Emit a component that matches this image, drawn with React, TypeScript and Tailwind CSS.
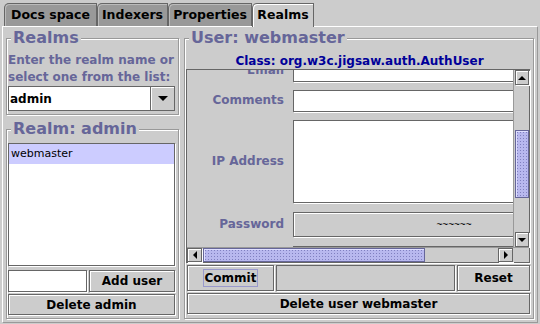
import type { ReactNode } from "react"

// Swing Metal look-alike: Realms tab of the Jigsaw admin tool

const etched =
  "border border-[#999999] shadow-[inset_1px_1px_0_#ffffff,1px_1px_0_#ffffff]"
const raised =
  "border border-[#666666] bg-[#cccccc] shadow-[inset_1px_1px_0_#ffffff,1px_1px_0_#ffffff]"
const field = "border border-[#666666] shadow-[1px_1px_0_#ffffff]"
const thumb =
  "border border-[#666699] bg-[#b8b8ee] bg-[radial-gradient(#8080c0_0.7px,transparent_0.8px)] bg-[length:3px_3px] shadow-[inset_1px_1px_0_#e0e0ff]"
const legend =
  "ml-[3px] px-[2px] bg-[#cccccc] text-[16px] leading-[16px] font-bold text-[#666699]"

function Tri({ dir }: { dir: "up" | "down" | "left" | "right" | "combo" }) {
  if (dir === "left" || dir === "right") {
    return (
      <svg width="4" height="8" viewBox="0 0 4 8">
        <polygon points={dir === "left" ? "4,0 4,8 0,4" : "0,0 0,8 4,4"} fill="#000" />
      </svg>
    )
  }
  if (dir === "combo") {
    return (
      <svg width="10" height="5" viewBox="0 0 10 5">
        <polygon points="0,0 10,0 5,5" fill="#000" />
      </svg>
    )
  }
  return (
    <svg width="8" height="4" viewBox="0 0 8 4">
      <polygon points={dir === "up" ? "0,4 8,4 4,0" : "0,0 8,0 4,4"} fill="#000" />
    </svg>
  )
}

function Tab({
  children,
  className = "",
  selected = false,
}: {
  children: ReactNode
  className?: string
  selected?: boolean
}) {
  return (
    <div
      className={`flex items-center justify-center rounded-tl-[5px] border-t border-l border-r border-[#666666] text-[12.5px] font-bold text-black ${
        selected
          ? "h-[24px] -mb-px pb-[1px] bg-[#cccccc] shadow-[inset_1px_1px_0_#ffffff]"
          : "h-[23px] bg-[#999999] shadow-[inset_1px_1px_0_#bbbbbb]"
      } ${className}`}
    >
      {children}
    </div>
  )
}

function Button({ children, className = "" }: { children: ReactNode; className?: string }) {
  return (
    <div
      className={`${raised} flex items-center justify-center text-[12px] font-bold text-black ${className}`}
    >
      {children}
    </div>
  )
}

function Row({
  label,
  className = "",
  children,
}: {
  label: string
  className?: string
  children: ReactNode
}) {
  return (
    <div className={`flex items-center shrink-0 ${className}`}>
      <div className="w-[97px] shrink-0 pb-[2px] text-right text-[12px] leading-[14px] font-bold text-[#666699]">
        {label}
      </div>
      <div className="ml-[9px] w-[322px] h-full shrink-0">{children}</div>
    </div>
  )
}

export default function App() {
  return (
    <div className="w-[540px] h-[324px] bg-[#cccccc] pt-[3px] px-[2px] pb-[1px] flex flex-col overflow-hidden font-['DejaVu_Sans',sans-serif]">
      {/* tabs */}
      <div className="relative z-10 flex items-end h-[23px] pl-[2px] shrink-0">
        <Tab className="w-[93px]">Docs space</Tab>
        <Tab className="w-[71px]">Indexers</Tab>
        <Tab className="w-[84px]">Properties</Tab>
        <Tab className="w-[62px]" selected>
          Realms
        </Tab>
      </div>

      <div className="flex-1 flex gap-[5px] pl-[3px] pr-[3px] pt-[3px] border border-white border-r-[#999999] border-b-[#999999]">
        {/* left column */}
        <div className="w-[173px] flex flex-col gap-[6px]">
          <fieldset className={`${etched} h-[85px] flex flex-col pl-[1px] pr-[3px] pt-[6px]`}>
            <legend className={legend}>Realms</legend>
            <div className="text-[12px] leading-[17px] font-bold text-[#666699] whitespace-nowrap">
              Enter the realm name or
            </div>
            <div className="text-[12px] leading-[17px] font-bold text-[#666699] whitespace-nowrap">
              select one from the list:
            </div>
            <div className="flex h-[25px] border border-[#666666]">
              <div className="flex-1 bg-white flex items-center pl-[1px] text-[12px] font-bold text-black">
                admin
              </div>
              <div className="w-[24px] bg-[#cccccc] border-l border-[#666666] shadow-[inset_1px_1px_0_#ffffff] flex items-center justify-center">
                <Tri dir="combo" />
              </div>
            </div>
          </fieldset>

          <fieldset className={`${etched} h-[198px] flex flex-col pl-[1px] pr-[3px] pt-[6px]`}>
            <legend className={legend}>Realm: admin</legend>
            <div className={`${field} h-[123px] shrink-0 bg-white`}>
              <div className="h-[20px] bg-[#ccccff] flex items-center pl-[2px] text-[11px] text-black">
                webmaster
              </div>
            </div>
            <div className="mt-[4px] flex gap-[2px] h-[22px] shrink-0">
              <div className={`${field} w-[79px] bg-white`} />
              <Button className="flex-1">Add user</Button>
            </div>
            <Button className="mt-[2px] h-[21px] shrink-0">Delete admin</Button>
          </fieldset>
        </div>

        {/* right column */}
        <fieldset className={`${etched} w-[350px] h-[289px] flex flex-col pl-[1px] pt-[7px]`}>
          <legend className={legend}>User: webmaster</legend>
          <div className="text-center text-[12px] leading-[16px] font-bold text-[#000099] whitespace-nowrap">
            Class: org.w3c.jigsaw.auth.AuthUser
          </div>

          {/* scroll pane */}
          <div className="w-[344px] h-[194px] border border-[#666666] shadow-[1px_1px_0_#ffffff] flex flex-col shrink-0">
            <div className="flex h-[177px]">
              <div className="w-[326px] h-[177px] overflow-hidden">
                <div className="w-[428px] -mt-[10px] flex flex-col">
                  <Row label="Email" className="h-[22px]">
                    <div className={`${field} h-full bg-white`} />
                  </Row>
                  <Row label="Comments" className="h-[22px] mt-[8px]">
                    <div className={`${field} h-full bg-white`} />
                  </Row>
                  <Row label="IP Address" className="h-[83px] mt-[8px]">
                    <div className={`${field} h-full bg-white`} />
                  </Row>
                  <Row label="Password" className="h-[25px] mt-[9px]">
                    <div className={`${raised} h-full flex items-center justify-center font-['Liberation_Sans',sans-serif] text-[10px] text-black`}>
                      ~~~~~~
                    </div>
                  </Row>
                  <Row label="" className="h-[22px] mt-[9px]">
                    <div className={`${field} h-full bg-white`} />
                  </Row>
                </div>
              </div>
              <div className="w-[16px] pl-[1px] flex flex-col bg-[#cccccc] border-l border-[#999999]">
                <div className={`${raised} h-[15px] shrink-0 flex items-center justify-center`}>
                  <Tri dir="up" />
                </div>
                <div className="flex-1 flex flex-col">
                  <div className={`${thumb} mt-[45px] h-[68px]`} />
                </div>
                <div className={`${raised} h-[15px] shrink-0 flex items-center justify-center`}>
                  <Tri dir="down" />
                </div>
              </div>
            </div>
            <div className="flex h-[15px] border-t border-[#999999]">
              <div className="w-[326px] flex">
                <div className={`${raised} w-[15px] shrink-0 flex items-center justify-center`}>
                  <Tri dir="left" />
                </div>
                <div className="flex-1 flex">
                  <div className={`${thumb} ml-[1px] w-[222px]`} />
                </div>
                <div className={`${raised} w-[15px] shrink-0 flex items-center justify-center`}>
                  <Tri dir="right" />
                </div>
              </div>
              <div className="w-[16px] bg-[#cccccc]" />
            </div>
          </div>

          <div className="ml-[1px] mt-[2px] flex gap-[2px] h-[26px] shrink-0">
            <Button className="w-[87px]">
              <span className="border border-[#9999cc] px-[1px] py-[1px] leading-[14px]">Commit</span>
            </Button>
            <div className={`${field} w-[179px] bg-[#cccccc]`} />
            <Button className="w-[73px]">Reset</Button>
          </div>
          <Button className="ml-[1px] mt-[2px] w-[343px] h-[21px] shrink-0">
            Delete user webmaster
          </Button>
        </fieldset>
      </div>
    </div>
  )
}
